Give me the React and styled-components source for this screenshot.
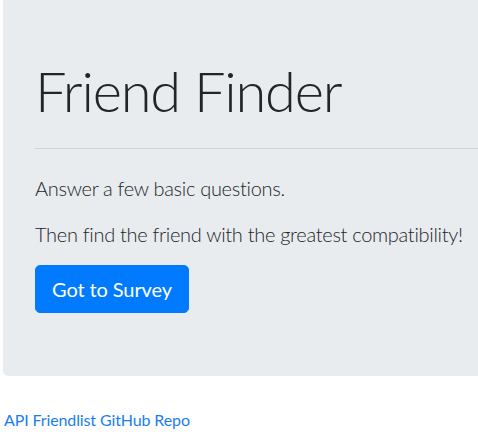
import React from 'react'
import styled, { createGlobalStyle } from 'styled-components'

const GlobalStyle = createGlobalStyle`
  html, body {
    margin: 0;
    padding: 0;
    background: #fff;
    overflow: hidden;
  }
  body {
    font-family: "Lato", "Noto Sans", "Liberation Sans", sans-serif;
    font-size: 16px;
    line-height: 1.5;
    color: #212529;
  }
`

const Page = styled.div`
  padding-left: 3px;
`

const Jumbotron = styled.section`
  background: #e9ecef;
  border-radius: 0 0 0 5px;
  padding: 57px 0 63px 32px;
  margin-bottom: 32px;
`

const Title = styled.h1`
  margin: 0;
  font-size: 56px;
  font-weight: 300;
  line-height: 1.2;
  letter-spacing: -1.2px;
`

const Rule = styled.hr`
  margin: 24px 0;
  border: 0;
  border-top: 1px solid rgba(0, 0, 0, 0.1);
`

const Lead = styled.p`
  margin: 0 0 16px;
  font-size: 20px;
  font-weight: 300;
  line-height: 30px;
  letter-spacing: -0.3px;
  white-space: nowrap;
`

const Button = styled.a`
  display: inline-block;
  padding: 8px 16px;
  border: 1px solid #007bff;
  font-size: 20px;
  line-height: 30px;
  letter-spacing: -0.1px;
  color: #fff;
  background: #007bff;
  border-radius: 5px;
  text-decoration: none;
`

const RepoLink = styled.a`
  display: block;
  padding-left: 1px;
  color: #1a7ef0;
  letter-spacing: -0.12px;
  text-decoration: none;
`

export default function App() {
  return (
    <Page>
      <GlobalStyle />
      <Jumbotron>
        <Title>Friend Finder</Title>
        <Rule />
        <Lead>Answer a few basic questions.</Lead>
        <Lead>Then find the friend with the greatest compatibility!</Lead>
        <Button href="#survey">Got to Survey</Button>
      </Jumbotron>
      <RepoLink href="#repo">API Friendlist GitHub Repo</RepoLink>
    </Page>
  )
}
